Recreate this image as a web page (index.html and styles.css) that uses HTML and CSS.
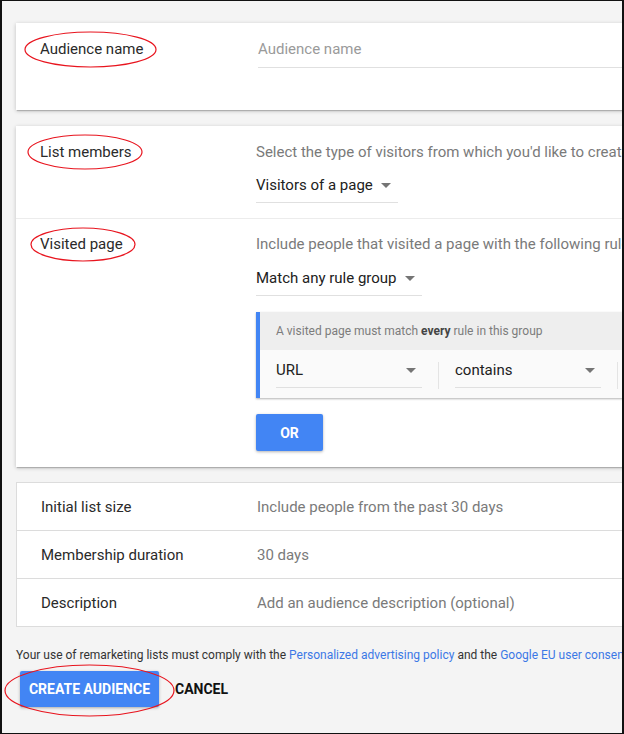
FILE: index.html
```html
<!DOCTYPE html>
<html>
<head>
<meta charset="utf-8">
<link rel="stylesheet" href="styles.css">
</head>
<body>
<div class="frame">
  <div class="page">
    <section class="card card-name">
      <div class="row">
        <div class="label">Audience name</div>
        <div class="value value-input">
          <div class="input">Audience name</div>
        </div>
      </div>
    </section>

    <section class="card card-members">
      <div class="section">
        <div class="label">List members</div>
        <div class="value">
          <div class="desc">Select the type of visitors from which you'd like to create a list</div>
          <div class="dropdown"><span>Visitors of a page</span><i class="arrow"></i></div>
        </div>
      </div>
      <div class="section section-split">
        <div class="label">Visited page</div>
        <div class="value">
          <div class="desc">Include people that visited a page with the following rules</div>
          <div class="dropdown dropdown-rule"><span>Match any rule group</span><i class="arrow"></i></div>
          <div class="rule-group">
            <div class="rule-head">A visited page must match <b>every</b> rule in this group</div>
            <div class="rule-body">
              <div class="field"><span>URL</span><i class="arrow"></i></div>
              <div class="sep"></div>
              <div class="field"><span>contains</span><i class="arrow"></i></div>
              <div class="sep"></div>
              <div class="field field-wide"><span></span></div>
            </div>
          </div>
          <button class="btn btn-or">OR</button>
        </div>
      </div>
    </section>

    <section class="card card-list">
      <div class="list-row">
        <div class="label">Initial list size</div>
        <div class="value muted">Include people from the past 30 days</div>
      </div>
      <div class="list-row">
        <div class="label">Membership duration</div>
        <div class="value muted">30 days</div>
      </div>
      <div class="list-row">
        <div class="label">Description</div>
        <div class="value muted">Add an audience description (optional)</div>
      </div>
    </section>

    <p class="policy">Your use of remarketing lists must comply with the <a>Personalized advertising policy</a> and the <a>Google EU user consent policy</a>.</p>

    <div class="actions">
      <button class="btn btn-create">CREATE AUDIENCE</button>
      <button class="btn-text">CANCEL</button>
    </div>
  </div>

  <svg class="marks" width="624" height="734" viewBox="0 0 624 734">
    <ellipse cx="90.5" cy="49.5" rx="65.5" ry="17.5"/>
    <ellipse cx="85" cy="152" rx="57" ry="17"/>
    <ellipse cx="83" cy="244.5" rx="52" ry="16.5"/>
    <ellipse cx="89.5" cy="690.5" rx="84.5" ry="25.5"/>
  </svg>
</div>
</body>
</html>
```

FILE: styles.css
```css
* { box-sizing: border-box; }

html, body {
  margin: 0;
  padding: 0;
}

body {
  font-family: Roboto, "Liberation Sans", Arial, sans-serif;
  color: #212121;
  background: #f4f4f4;
}

.frame {
  position: relative;
  width: 624px;
  height: 734px;
  overflow: hidden;
  background: #f4f4f4;
  border-top: 1px solid #111;
  border-left: 2px solid #111;
  border-right: 2px solid #111;
  border-bottom: 1px solid #111;
}

.page {
  width: 900px;
  padding: 22px 0 0 14px;
}

.card {
  background: #fff;
  box-shadow: 0 1px 4px rgba(0, 0, 0, 0.22), 0 2px 1px -1px rgba(0, 0, 0, 0.18);
}

.label {
  width: 240px;
  flex: none;
  padding-left: 24px;
  font-size: 15px;
  line-height: 20px;
  color: #2a2a2a;
}

.value {
  flex: 1;
  font-size: 15px;
  line-height: 20px;
}

/* card 1 */
.card-name {
  padding: 16px 0 42px;
}

.row {
  display: flex;
}

.value-input {
  padding-left: 2px;
}

.input {
  color: #9a9a9a;
  padding: 0 0 8px 0;
  border-bottom: 1px solid #e0e0e0;
}

/* card 2 */
.card-members {
  margin-top: 16px;
}

.section {
  display: flex;
  padding: 16px 0 15px;
}

.section-split {
  border-top: 1px solid #ececec;
  padding-top: 15px;
  padding-bottom: 16px;
}

.desc {
  color: #7a7a7a;
  white-space: nowrap;
}

.dropdown {
  display: inline-flex;
  align-items: center;
  margin-top: 13px;
  padding-bottom: 7px;
  padding-right: 7px;
  border-bottom: 1px solid #e0e0e0;
  color: #212121;
}

.dropdown-rule {
  margin-top: 14px;
}

.arrow {
  display: inline-block;
  width: 0;
  height: 0;
  border-left: 5px solid transparent;
  border-right: 5px solid transparent;
  border-top: 5px solid #757575;
  margin-left: 8px;
  margin-top: 1px;
}

.rule-group {
  margin-top: 16px;
  border-left: 4px solid #4285f4;
  box-shadow: 0 1px 2px rgba(0, 0, 0, 0.3);
}

.rule-head {
  height: 38px;
  background: #eeeeee;
  padding: 0 16px;
  font-size: 12px;
  line-height: 38px;
  color: #7c7c7c;
}

.rule-head b {
  color: #444;
  font-weight: 700;
}

.rule-body {
  display: flex;
  align-items: flex-start;
  height: 48px;
  background: #fafafa;
  padding: 10px 0 0 16px;
}

.field {
  display: flex;
  align-items: center;
  justify-content: space-between;
  width: 146px;
  padding-bottom: 7px;
  border-bottom: 1px solid #e0e0e0;
  font-size: 15px;
  line-height: 20px;
  color: #212121;
}

.field .arrow {
  margin-right: 6px;
}

.field-wide {
  width: 200px;
}

.sep {
  width: 1px;
  height: 27px;
  margin: 2px 16px 0;
  background: #e4e4e4;
}

.btn {
  border: none;
  border-radius: 2px;
  background: #4285f4;
  color: #fff;
  font-family: Roboto, "Liberation Sans", Arial, sans-serif;
  font-weight: 700;
  font-size: 14px;
  box-shadow: 0 1px 3px rgba(0, 0, 0, 0.3);
  padding: 0;
}

.btn-or {
  display: block;
  margin-top: 16px;
  width: 67px;
  height: 37px;
}

/* card 3 */
.card-list {
  margin-top: 15px;
  border: 1px solid #dcdcdc;
  box-shadow: none;
}

.list-row {
  display: flex;
  align-items: center;
  height: 48px;
  border-top: 1px solid #dcdcdc;
}

.list-row:first-child {
  border-top: none;
  height: 47px;
}

.muted {
  color: #7a7a7a;
}

.policy {
  margin: 20px 0 0 0;
  font-size: 12px;
  line-height: 16px;
  color: #333;
  white-space: nowrap;
}

.policy a {
  color: #3c78e6;
}

.actions {
  display: flex;
  align-items: center;
  margin: 8px 0 0 4px;
}

.btn-create {
  width: 139px;
  height: 36px;
}

.btn-text {
  margin-left: 16px;
  border: none;
  background: none;
  padding: 0;
  font-family: Roboto, "Liberation Sans", Arial, sans-serif;
  font-weight: 700;
  font-size: 14px;
  color: #111;
}

.marks {
  position: absolute;
  left: -2px;
  top: -1px;
  pointer-events: none;
}

.marks ellipse {
  fill: none;
  stroke: #e8141e;
  stroke-width: 1.2;
}
```
